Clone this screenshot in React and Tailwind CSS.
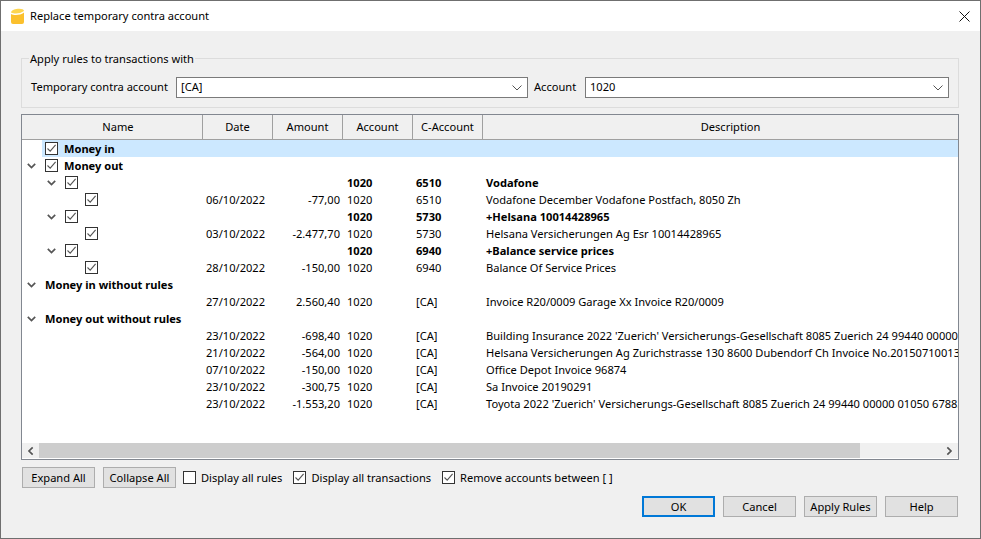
const font = { fontFamily: '"Noto Sans", sans-serif' };

const rows = [
  { level: 0, check: true, name: "Money in", bold: true, selected: true },
  { level: 0, arrow: true, check: true, name: "Money out", bold: true },
  { level: 1, arrow: true, check: true, bold: true, account: "1020", contra: "6510", desc: "Vodafone" },
  { level: 2, check: true, date: "06/10/2022", amount: "-77,00", account: "1020", contra: "6510", desc: "Vodafone December Vodafone Postfach, 8050 Zh" },
  { level: 1, arrow: true, check: true, bold: true, account: "1020", contra: "5730", desc: "+Helsana 10014428965" },
  { level: 2, check: true, date: "03/10/2022", amount: "-2.477,70", account: "1020", contra: "5730", desc: "Helsana Versicherungen Ag Esr 10014428965" },
  { level: 1, arrow: true, check: true, bold: true, account: "1020", contra: "6940", desc: "+Balance service prices" },
  { level: 2, check: true, date: "28/10/2022", amount: "-150,00", account: "1020", contra: "6940", desc: "Balance Of Service Prices" },
  { level: 0, arrow: true, name: "Money in without rules", bold: true },
  { level: 1, date: "27/10/2022", amount: "2.560,40", account: "1020", contra: "[CA]", desc: "Invoice R20/0009 Garage Xx Invoice R20/0009" },
  { level: 0, arrow: true, name: "Money out without rules", bold: true },
  { level: 1, date: "23/10/2022", amount: "-698,40", account: "1020", contra: "[CA]", desc: "Building Insurance 2022 'Zuerich' Versicherungs-Gesellschaft 8085 Zuerich 24 99440 00000" },
  { level: 1, date: "21/10/2022", amount: "-564,00", account: "1020", contra: "[CA]", desc: "Helsana Versicherungen Ag Zurichstrasse 130 8600 Dubendorf Ch Invoice No.20150710013" },
  { level: 1, date: "07/10/2022", amount: "-150,00", account: "1020", contra: "[CA]", desc: "Office Depot Invoice 96874" },
  { level: 1, date: "23/10/2022", amount: "-300,75", account: "1020", contra: "[CA]", desc: "Sa Invoice 20190291" },
  { level: 1, date: "23/10/2022", amount: "-1.553,20", account: "1020", contra: "[CA]", desc: "Toyota 2022 'Zuerich' Versicherungs-Gesellschaft 8085 Zuerich 24 99440 00000 01050 67883" },
];

function Check({ checked = true }) {
  return (
    <span className="flex h-[13px] w-[13px] shrink-0 items-center justify-center border border-[#333333] bg-white">
      {checked && (
        <svg width="11" height="11" viewBox="0 0 11 11" fill="none">
          <path d="M1.5 5.5 L4.2 8.2 L9.6 1.8" stroke="#555555" strokeWidth="1.1" />
        </svg>
      )}
    </span>
  );
}

function Chevron({ className = "" }) {
  return (
    <svg width="9" height="6" viewBox="0 0 9 6" fill="none" className={className}>
      <path d="M0.8 0.8 L4.5 4.5 L8.2 0.8" stroke="#555555" strokeWidth="1.7" />
    </svg>
  );
}

function HeaderCell({ label, className = "" }) {
  return (
    <div className={`flex h-full items-center justify-center border-r border-[#a0a0a0] pt-[1px] ${className}`}>{label}</div>
  );
}

function Row({ row }) {
  const indent = row.level === 0 ? "pl-[5px]" : row.level === 1 ? "pl-[25px]" : "pl-[45px]";
  return (
    <div className={`flex h-[17px] items-center leading-[17px] ${row.bold ? "font-bold" : ""}`}>
      <div className={`flex h-full w-[181px] shrink-0 items-center ${indent}`}>
        <span className="flex w-[15px] shrink-0 items-center">{row.arrow && <Chevron />}</span>
        <div className={`flex h-full grow items-center pl-[3px] ${row.selected ? "bg-[#cce8ff]" : ""}`}>
          {row.check && <span className="mr-[6px]"><Check /></span>}
          {row.name && <span className="whitespace-nowrap">{row.name}</span>}
        </div>
      </div>
      <div className={`flex h-full min-w-0 grow items-center ${row.selected ? "bg-[#cce8ff]" : ""}`}>
        <div className="w-[70px] shrink-0 pl-[3px]">{row.date}</div>
        <div className="w-[70px] shrink-0 pr-[3px] text-right">{row.amount}</div>
        <div className="w-[70px] shrink-0 pl-[4px]">{row.account}</div>
        <div className="w-[70px] shrink-0 pl-[3px]">{row.contra}</div>
        <div className="min-w-0 grow overflow-hidden whitespace-nowrap pl-[3px]">{row.desc}</div>
      </div>
    </div>
  );
}

function Button({ children, focus }) {
  return (
    <button className={`flex h-[21px] w-[73px] items-center justify-center bg-[#e1e1e1] pt-[1px] ${focus ? "border-2 border-[#0078d7]" : "border border-[#adadad]"}`}>
      {children}
    </button>
  );
}

function CheckLabel({ checked, children }) {
  return (
    <label className="flex items-center gap-[5px]">
      <Check checked={checked} />
      <span className="whitespace-nowrap pt-[1px]">{children}</span>
    </label>
  );
}

function Combo({ value, className }) {
  return (
    <div className={`flex h-[21px] items-center justify-between border border-[#7a7a7a] bg-white pl-[4px] pr-[5px] ${className}`}>
      <span>{value}</span>
      <svg width="10" height="6" viewBox="0 0 10 6" fill="none">
        <path d="M0.5 0.5 L5 5 L9.5 0.5" stroke="#555555" strokeWidth="1" />
      </svg>
    </div>
  );
}

export default function App() {
  return (
    <div style={font} className="flex h-[539px] w-[981px] flex-col overflow-hidden border border-[#6f6f6f] bg-[#f0f0f0] text-[11.1px] text-black">
      {/* barre de titre */}
      <div className="flex h-[30px] shrink-0 items-center bg-white pl-[10px] pr-[10px]">
        <svg width="13" height="16" viewBox="0 0 13 16" className="shrink-0">
          <path d="M0 6 C3 7.5 9 7.5 13 4.5 L13 14 Q13 16 11 16 L2 16 Q0 16 0 14 Z" fill="#fbc02d" />
          <path d="M0 4.4 C0 0.5 13 -1 13 3 C9 6 3 6 0 4.4 Z" fill="#fdd54f" />
        </svg>
        <span className="ml-[6px] grow pt-[1px]">Replace temporary contra account</span>
        <svg width="11" height="11" viewBox="0 0 11 11" fill="none">
          <path d="M0.5 0.5 L10.5 10.5 M10.5 0.5 L0.5 10.5" stroke="#111111" strokeWidth="1" />
        </svg>
      </div>

      <div className="flex grow flex-col px-[20px]">
        {/* groupe */}
        <fieldset className="mt-[19px] h-[58px] w-[938px] shrink-0 border border-[#dcdcdc] px-[9px]">
          <legend className="ml-[-2px] px-[1px] leading-[17px]">Apply rules to transactions with</legend>
          <div className="mt-[10px] flex items-center">
            <span className="w-[145px] shrink-0 whitespace-nowrap">Temporary contra account</span>
            <Combo value="[CA]" className="w-[352px]" />
            <span className="ml-[6px] w-[51px] shrink-0">Account</span>
            <Combo value="1020" className="w-[364px]" />
          </div>
        </fieldset>

        {/* table */}
        <div className="mt-[6px] flex h-[346px] w-[938px] shrink-0 flex-col border border-[#828790] bg-white pb-[1px]">
          <div className="flex h-[25px] shrink-0 items-center border-b border-[#a0a0a0] bg-[#f0f0f0]">
            <HeaderCell label={<span className="pl-[12px]">Name</span>} className="w-[181px]" />
            <HeaderCell label="Date" className="w-[70px]" />
            <HeaderCell label="Amount" className="w-[70px]" />
            <HeaderCell label="Account" className="w-[70px]" />
            <HeaderCell label="C-Account" className="w-[70px]" />
            <div className="flex grow items-center justify-center pl-[20px] pt-[1px]">Description</div>
          </div>
          <div className="min-h-0 grow overflow-hidden">
            {rows.map((row, i) => (
              <Row key={i} row={row} />
            ))}
          </div>
          <div className="flex h-[15px] shrink-0 items-center bg-[#f0f0f0]">
            <span className="flex w-[17px] shrink-0 justify-center">
              <Chevron className="rotate-90" />
            </span>
            <div className="h-full w-[821px] bg-[#cdcdcd]" />
            <span className="ml-auto flex w-[17px] shrink-0 justify-center">
              <Chevron className="-rotate-90" />
            </span>
          </div>
        </div>

        {/* options */}
        <div className="mt-[7px] flex items-center pl-[1px]">
          <Button>Expand All</Button>
          <span className="ml-[8px]"><Button>Collapse All</Button></span>
          <span className="ml-[7px]"><CheckLabel checked={false}>Display all rules</CheckLabel></span>
          <span className="ml-[11px]"><CheckLabel checked>Display all transactions</CheckLabel></span>
          <span className="ml-[11px]"><CheckLabel checked>Remove accounts between [ ]</CheckLabel></span>
        </div>

        <div className="mt-[8px] flex w-[937px] justify-end gap-[8px]">
          <Button focus>OK</Button>
          <Button>Cancel</Button>
          <Button>Apply Rules</Button>
          <Button>Help</Button>
        </div>
      </div>
    </div>
  );
}
